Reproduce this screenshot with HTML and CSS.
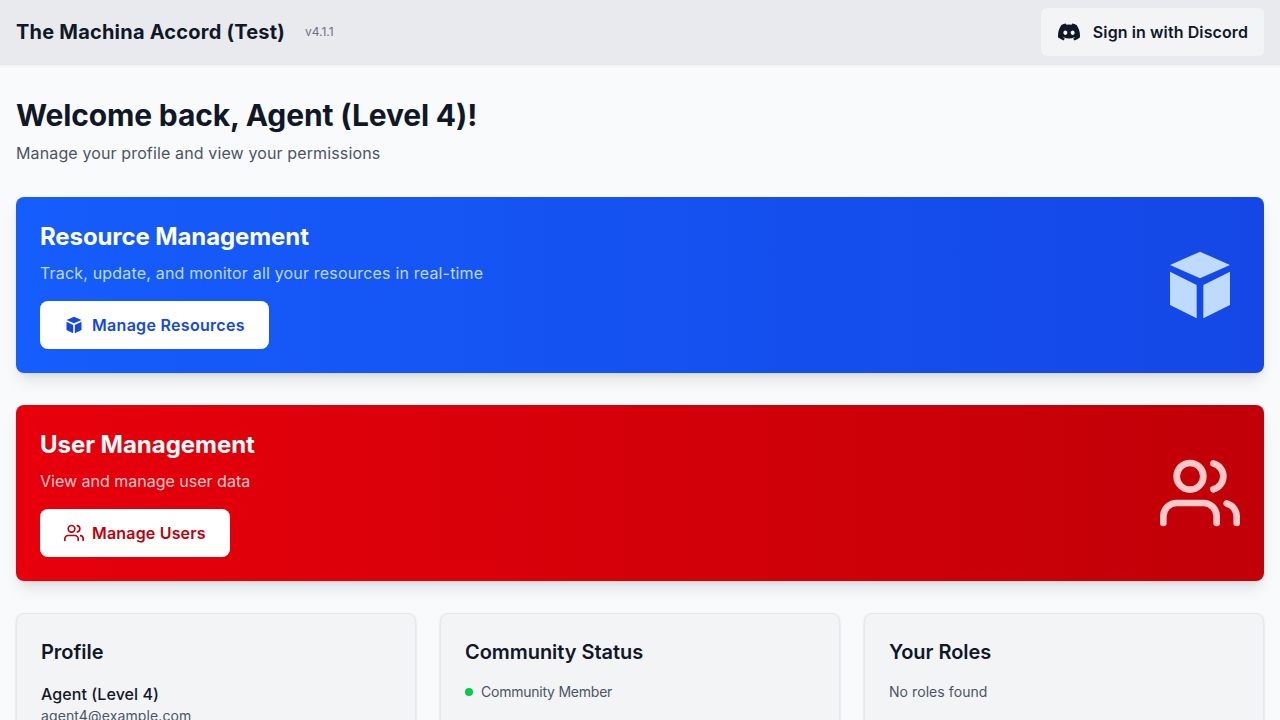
FILE: index.html
```html
<!DOCTYPE html>
<html lang="en">
<head>
<meta charset="utf-8">
<title>The Machina Accord (Test)</title>
<link rel="stylesheet" href="styles.css">
</head>
<body>
<svg class="defs" width="0" height="0" aria-hidden="true">
  <symbol id="cube" viewBox="0 0 24 24"><path d="M12 2 21 6 12 10 3 6zM3 8l8 4v10l-8-4zM21 8l-8 4v10l8-4z"/></symbol>
  <symbol id="users" viewBox="0 0 24 24"><g fill="none" stroke="currentColor" stroke-width="2" stroke-linecap="round" stroke-linejoin="round"><path d="M17 21v-2a4 4 0 0 0-4-4H5a4 4 0 0 0-4 4v2"/><circle cx="9" cy="7" r="4"/><path d="M23 21v-2a4 4 0 0 0-3-3.87M16 3.13a4 4 0 0 1 0 7.75"/></g></symbol>
</svg>
<header class="topbar">
  <div class="brand"><span class="brand-name">The Machina Accord (Test)</span><span class="version">v4.1.1</span></div>
  <button class="signin">
    <svg class="discord" viewBox="0 0 24 24" fill="currentColor"><path d="M20.317 4.37a19.791 19.791 0 0 0-4.885-1.515.074.074 0 0 0-.079.037c-.21.375-.444.864-.608 1.25a18.27 18.27 0 0 0-5.487 0 12.64 12.64 0 0 0-.617-1.25.077.077 0 0 0-.079-.037A19.736 19.736 0 0 0 3.677 4.37a.07.07 0 0 0-.032.027C.533 9.046-.32 13.58.099 18.057a.082.082 0 0 0 .031.057 19.9 19.9 0 0 0 5.993 3.03.078.078 0 0 0 .084-.028 14.09 14.09 0 0 0 1.226-1.994.076.076 0 0 0-.041-.106 13.107 13.107 0 0 1-1.872-.892.077.077 0 0 1-.008-.128 10.2 10.2 0 0 0 .372-.292.074.074 0 0 1 .077-.01c3.928 1.793 8.18 1.793 12.062 0a.074.074 0 0 1 .078.01c.12.098.246.198.373.292a.077.077 0 0 1-.006.127 12.299 12.299 0 0 1-1.873.892.077.077 0 0 0-.041.107c.36.698.772 1.362 1.225 1.993a.076.076 0 0 0 .084.028 19.839 19.839 0 0 0 6.002-3.03.077.077 0 0 0 .032-.054c.5-5.177-.838-9.674-3.549-13.66a.061.061 0 0 0-.031-.03zM8.02 15.33c-1.183 0-2.157-1.085-2.157-2.419 0-1.333.956-2.419 2.157-2.419 1.21 0 2.176 1.096 2.157 2.42 0 1.333-.956 2.418-2.157 2.418zm7.975 0c-1.183 0-2.157-1.085-2.157-2.419 0-1.333.955-2.419 2.157-2.419 1.21 0 2.176 1.096 2.157 2.42 0 1.333-.946 2.418-2.157 2.418z"/></svg>
    <span>Sign in with Discord</span>
  </button>
</header>
<main class="content">
  <section class="welcome">
    <h1>Welcome back, Agent (Level 4)!</h1>
    <p>Manage your profile and view your permissions</p>
  </section>
  <section class="banner blue">
    <div>
      <h2>Resource Management</h2>
      <p>Track, update, and monitor all your resources in real-time</p>
      <a class="action"><svg class="small-icon" fill="currentColor"><use href="#cube"/></svg>Manage Resources</a>
    </div>
    <svg class="large-icon" fill="currentColor"><use href="#cube"/></svg>
  </section>
  <section class="banner red">
    <div>
      <h2>User Management</h2>
      <p>View and manage user data</p>
      <a class="action"><svg class="small-icon"><use href="#users"/></svg>Manage Users</a>
    </div>
    <svg class="large-icon"><use href="#users"/></svg>
  </section>
  <div class="cards">
    <section class="card"><h3>Profile</h3><div class="name">Agent (Level 4)</div><div class="detail email">agent4@example.com</div></section>
    <section class="card"><h3>Community Status</h3><div class="status"><span class="dot"></span>Community Member</div></section>
    <section class="card"><h3>Your Roles</h3><div class="detail">No roles found</div></section>
  </div>
</main>
</body>
</html>
```
FILE: styles.css
```css
* { box-sizing: border-box; margin: 0; padding: 0; }
body { height: 720px; overflow: hidden; background: #f9fafb; color: #101828; font: 16px/24px Inter, sans-serif; }
.defs { display: none; }
svg { flex: none; display: block; }
.topbar { height: 65px; padding: 8px 16px; display: flex; align-items: flex-start; justify-content: space-between; background: #e9eaed; border-bottom: 1px solid #e5e7eb; box-shadow: 0 1px 2px #0000000d; }
.brand { height: 48px; display: flex; align-items: center; gap: 20px; }
.brand-name { font-size: 20px; line-height: 28px; font-weight: 700; letter-spacing: .21px; }
.version { color: #6a7282; font-size: 12px; line-height: 16px; }
.signin { height: 48px; padding: 0 16px; display: flex; align-items: center; gap: 12px; border: 0; border-radius: 6px; background: #f3f4f6; color: #101828; font: 600 16px/24px Inter, sans-serif; letter-spacing: .1px; }
.discord { width: 24px; height: 24px; padding: 1px; }
.content { padding: 32px 16px 0; }
.welcome { margin-bottom: 32px; }
h1 { font-size: 30px; line-height: 36px; font-weight: 700; margin-bottom: 8px; letter-spacing: -.15px; }
.welcome p { color: #4a5565; letter-spacing: .13px; }
.banner { height: 176px; margin-bottom: 32px; padding: 24px; border-radius: 8px; display: flex; align-items: center; justify-content: space-between; box-shadow: 0 10px 15px -3px #0000001a, 0 4px 6px -4px #0000001a; }
.blue { background: linear-gradient(90deg, #155dfc, #1447e6); color: #bedbff; }
.red { background: linear-gradient(90deg, #e7000b, #c10007); color: #ffc9c9; }
h2 { color: #fff; font-size: 24px; line-height: 32px; font-weight: 700; margin-bottom: 8px; letter-spacing: -.1px; }
.red h2 { letter-spacing: -.03px; }
.banner p { margin-bottom: 16px; }
.blue p { letter-spacing: .18px; }
.action { height: 48px; padding: 0 24px; display: inline-flex; align-items: center; gap: 8px; border-radius: 8px; background: #fff; font-weight: 600; vertical-align: top; }
.blue .action { color: #1447e6; letter-spacing: .3px; }
.red .action { color: #c10007; letter-spacing: .18px; }
.small-icon { width: 20px; height: 20px; }
.large-icon { width: 80px; height: 80px; }
.cards { display: grid; grid-template-columns: repeat(3, 1fr); gap: 24px; }
.card { height: 210px; padding: 24px; border: 1px solid #e5e7eb; border-radius: 8px; background: #f3f4f6; box-shadow: 0 1px 3px #0000001a, 0 1px 2px -1px #0000001a; }
h3 { font-size: 20px; line-height: 28px; font-weight: 600; margin-bottom: 16px; letter-spacing: -.05px; }
.name { font-weight: 500; letter-spacing: .07px; }
.detail, .status { font-size: 14px; line-height: 20px; color: #4a5565; letter-spacing: .07px; }
.email { letter-spacing: .12px; }
.status { display: flex; align-items: center; gap: 8px; letter-spacing: -.23px; }
.dot { width: 8px; height: 8px; border-radius: 50%; background: #00c950; }
```
